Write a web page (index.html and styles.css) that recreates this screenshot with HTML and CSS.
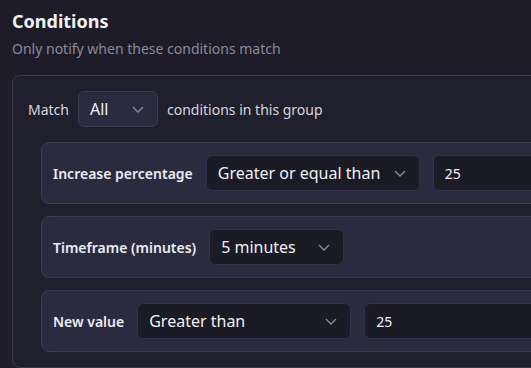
FILE: index.html
```html
<!DOCTYPE html>
<html>
<head>
<meta charset="utf-8">
<link rel="stylesheet" href="styles.css">
</head>
<body>
<main class="page">
  <h1 class="title">Conditions</h1>
  <p class="subtitle">Only notify when these conditions match</p>
  <section class="panel">
    <div class="match-row">
      <span class="match-label">Match</span>
      <div class="select select-light select-match">
        <span class="select-text">All</span>
        <svg class="chev" width="12" height="7" viewBox="0 0 12 7"><path d="M1 1l5 5 5-5" fill="none" stroke="currentColor" stroke-width="1.3"/></svg>
      </div>
      <span class="match-label">conditions in this group</span>
    </div>
    <div class="cards">
      <div class="card">
        <span class="card-label">Increase percentage</span>
        <div class="select select-op">
          <span class="select-text">Greater or equal than</span>
          <svg class="chev" width="12" height="7" viewBox="0 0 12 7"><path d="M1 1l5 5 5-5" fill="none" stroke="currentColor" stroke-width="1.3"/></svg>
        </div>
        <div class="input">25</div>
      </div>
      <div class="card">
        <span class="card-label">Timeframe (minutes)</span>
        <div class="select select-time">
          <span class="select-text">5 minutes</span>
          <svg class="chev" width="12" height="7" viewBox="0 0 12 7"><path d="M1 1l5 5 5-5" fill="none" stroke="currentColor" stroke-width="1.3"/></svg>
        </div>
      </div>
      <div class="card">
        <span class="card-label">New value</span>
        <div class="select select-op">
          <span class="select-text">Greater than</span>
          <svg class="chev" width="12" height="7" viewBox="0 0 12 7"><path d="M1 1l5 5 5-5" fill="none" stroke="currentColor" stroke-width="1.3"/></svg>
        </div>
        <div class="input">25</div>
      </div>
    </div>
  </section>
</main>
</body>
</html>
```
FILE: styles.css
```css
html, body {
  margin: 0;
  padding: 0;
  background: #1d1c28;
  overflow: hidden;
}
body {
  font-family: "Noto Sans", "Open Sans", sans-serif;
  color: #e8e8ef;
  width: 531px;
  height: 368px;
}
.page {
  padding: 9px 0 0 12px;
}
.title {
  margin: 0;
  font-size: 18px;
  line-height: 24px;
  font-weight: 700;
  color: #f2f2f6;
}
.subtitle {
  margin: 6px 0 0;
  font-size: 14px;
  line-height: 20px;
  color: #8a8a9b;
}
.panel {
  margin-top: 16px;
  width: 620px;
  box-sizing: border-box;
  border: 1px solid #393a4c;
  border-radius: 8px;
  background: #201f2d;
  padding: 15px;
  display: flex;
  flex-direction: column;
  gap: 15px;
}
.match-row {
  display: flex;
  align-items: center;
  gap: 9px;
}
.match-label {
  font-size: 14px;
  color: #d6d6de;
}
.cards {
  display: flex;
  flex-direction: column;
  gap: 12px;
  margin-left: 13px;
}
.card {
  display: flex;
  align-items: center;
  gap: 13px;
  padding: 12px 11px;
  border: 1px solid #3c3d53;
  border-radius: 8px;
  background: #2a2b3f;
}
.card-label {
  font-size: 14px;
  font-weight: 600;
  color: #ececf2;
  white-space: nowrap;
}
.select {
  box-sizing: border-box;
  height: 36px;
  display: flex;
  align-items: center;
  justify-content: space-between;
  padding: 0 13px 0 11px;
  border: 1px solid #32334a;
  border-radius: 6px;
  background: #1b1b26;
  flex: none;
}
.select-light {
  background: #2a2b3e;
  border-color: #3a3b50;
}
.select-match { width: 80px; }
.select-op { width: 214px; }
.select-time { width: 135px; }
.select-text {
  font-size: 16px;
  color: #f0f0f4;
  white-space: nowrap;
}
.chev {
  color: #8c8d9c;
  flex: none;
}
.input {
  box-sizing: border-box;
  height: 36px;
  width: 220px;
  flex: none;
  display: flex;
  align-items: center;
  padding: 0 11px;
  border: 1px solid #32334a;
  border-radius: 6px;
  background: #1b1b26;
  font-size: 14px;
  color: #f0f0f4;
}
```
